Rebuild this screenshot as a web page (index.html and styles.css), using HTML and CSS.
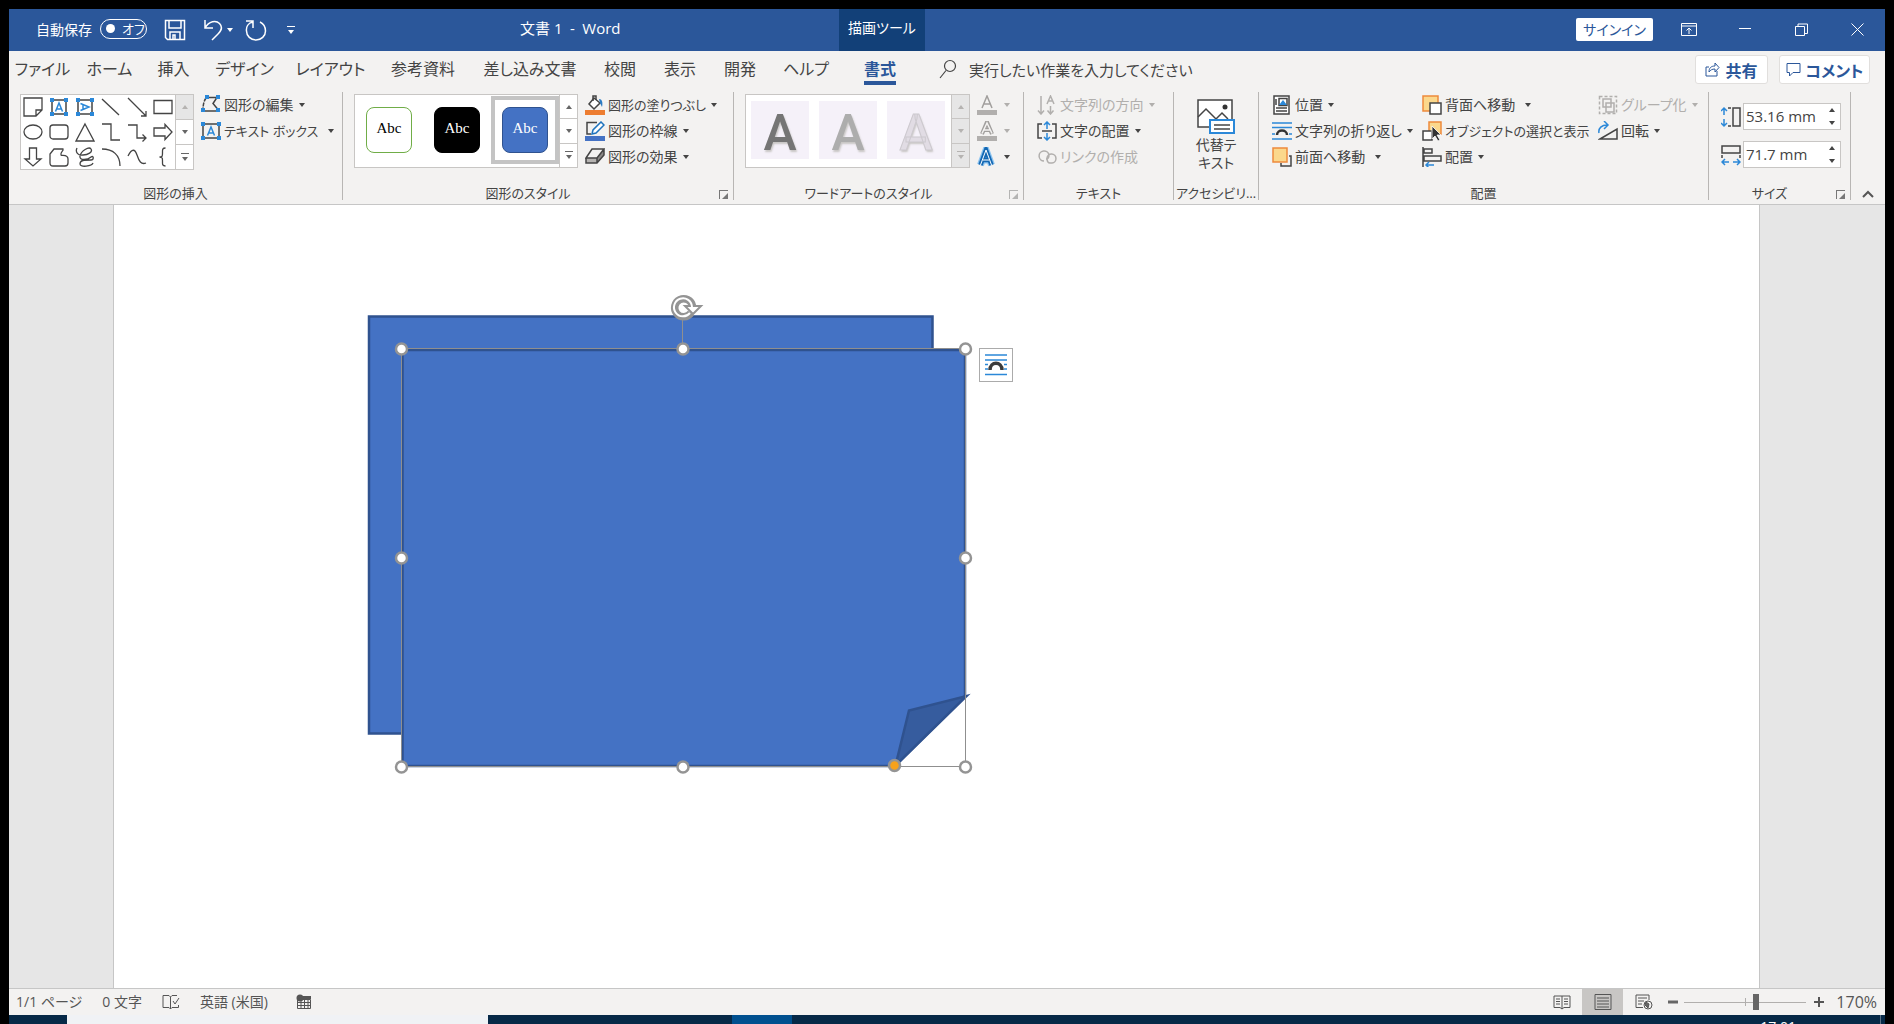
FILE: index.html
```html
<!DOCTYPE html>
<html lang="ja">

<head>
  <meta charset="UTF-8">
  <meta name="viewport" content="width=device-width, initial-scale=1.0">
  <title>文書 1 - Word</title>
  <link rel="stylesheet" href="styles.css">
</head>

<body>
  <div class="window">
    <header class="titlebar">
      <div class="quick-access">
        <label class="autosave" for="autosave">自動保存</label>
        <button type="button" class="toggle" id="autosave"><span class="knob"></span>オフ</button>
        <button type="button" class="qa-btn save" aria-label="保存">
          <svg width="22" height="22" viewBox="0 0 22 22" class="line"><path d="M1.5 1.5h19v19h-17l-2-2zM5 2v7h12V2M6 20v-7h10v7M9 20v-4h2v4"/></svg>
        </button>
        <button type="button" class="qa-btn undo" aria-label="元に戻す">
          <svg width="20" height="22" viewBox="0 0 20 22" class="line"><path d="M2 1v8h8M2 9C6 2 13 1 16.500 4.500C20 8 18 12 15 15l-6 6"/></svg>
          <span class="caret"></span>
        </button>
        <button type="button" class="qa-btn redo" aria-label="やり直し">
          <svg width="22" height="22" viewBox="0 0 22 22" class="line"><path d="M1 2h7v7M8 3C3 4 1 8 1.500 12a9.500 9 0 0 0 19 0C20.500 8 19 5 15 3"/></svg>
        </button>
        <button type="button" class="qa-btn customize" aria-label="カスタマイズ"><span class="bar"></span><span class="caret"></span></button>
      </div>
      <h1 class="doc-title">文書 1&ensp;-&ensp;Word</h1>
      <div class="tool-tab">描画ツール</div>
      <div class="window-controls">
        <button type="button" class="sign-in">サインイン</button>
        <button type="button" class="win-btn" aria-label="リボンの表示オプション">
          <svg width="16" height="14" viewBox="0 0 16 14" class="line"><path d="M.5 1.500h15v12H.5zM.5 4h15M8 12V6M5.500 8.500L8 6l2.500 2.500"/></svg>
        </button>
        <button type="button" class="win-btn" aria-label="最小化">
          <svg width="12" height="12" viewBox="0 0 12 12" class="line"><path d="M0 5.500h12"/></svg>
        </button>
        <button type="button" class="win-btn" aria-label="元に戻す (縮小)">
          <svg width="13" height="13" viewBox="0 0 13 13" class="line"><path d="M.5 3.500h9v9h-9zM3 3V1h9.500v9.500H10"/></svg>
        </button>
        <button type="button" class="win-btn" aria-label="閉じる">
          <svg width="13" height="13" viewBox="0 0 13 13" class="line"><path d="M.5.5l12 12M12.500.5l-12 12"/></svg>
        </button>
      </div>
    </header>

    <div class="tab-row">
      <nav class="tabs">
        <a href="#">ファイル</a>
        <a href="#">ホーム</a>
        <a href="#">挿入</a>
        <a href="#">デザイン</a>
        <a href="#">レイアウト</a>
        <a href="#">参考資料</a>
        <a href="#">差し込み文書</a>
        <a href="#">校閲</a>
        <a href="#">表示</a>
        <a href="#">開発</a>
        <a href="#">ヘルプ</a>
        <a href="#" class="active">書式</a>
      </nav>
      <button type="button" class="tell-me">
        <svg width="18" height="20" viewBox="0 0 18 20" class="line"><circle cx="11" cy="7" r="5.500"/><path d="M7 11.500L1 19"/></svg>
        実行したい作業を入力してください
      </button>
      <div class="tab-actions">
        <button type="button" class="action">
          <svg width="15" height="15" viewBox="0 0 15 15" class="line"><path d="M4 5H1v9h11V9M4 10c0-4 2-6 6-6V1l4 4.500-4 4.500V7C7 7 5.500 8 4 10z"/></svg>
          共有
        </button>
        <button type="button" class="action comment">
          <svg width="15" height="15" viewBox="0 0 15 15" class="line"><path d="M1 1.500h13v9H7l-3.500 3.500v-3.500H1z"/></svg>
          コメント
        </button>
      </div>
    </div>

    <div class="ribbon">
      <section class="group insert-shapes">
        <div class="group-body">
          <div class="gallery shapes">
            <div class="shape-grid">
              <svg viewBox="0 0 20 20" class="line"><path d="M1 1h18v12l-6 6H1zM13 19v-6h6"/></svg>
              <svg viewBox="0 0 20 20"><path class="ln" d="M3 3h14v14H3z"/><path class="accent" d="M1 1h4v4H1zM15 1h4v4h-4zM1 15h4v4H1zM15 15h4v4h-4z"/><path class="accent-ln" d="M6.500 14.500L10 6l3.500 8.500M8 12h4"/></svg>
              <svg viewBox="0 0 20 20"><path class="ln" d="M3 3h14v14H3z"/><path class="accent" d="M1 1h4v4H1zM15 1h4v4h-4zM1 15h4v4H1zM15 15h4v4h-4z"/><path class="accent-ln" d="M5.500 6.500L14 10l-8.500 3.500M8 8v4"/></svg>
              <svg viewBox="0 0 20 20" class="line"><path d="M1 2l17 16"/></svg>
              <svg viewBox="0 0 20 20" class="line"><path d="M1 1l18 18M14 19h5v-5"/></svg>
              <svg viewBox="0 0 20 20" class="line"><path d="M1 3.500h18v13H1z"/></svg>
              <svg viewBox="0 0 20 20" class="line"><ellipse cx="10" cy="10" rx="9" ry="7"/></svg>
              <svg viewBox="0 0 20 20" class="line"><rect x="1" y="3" width="18" height="14" rx="3"/></svg>
              <svg viewBox="0 0 20 20" class="line"><path d="M10 2l9 17H1z"/></svg>
              <svg viewBox="0 0 20 20" class="line"><path d="M1 2h9v16h9"/></svg>
              <svg viewBox="0 0 20 20" class="line"><path d="M1 3h9v13h9M15.500 12.500L19 16l-3.500 3.500"/></svg>
              <svg viewBox="0 0 20 20" class="line"><path d="M1 6h11V2.500l7 7.500-7 7.500V14H1z"/></svg>
              <svg viewBox="0 0 20 20" class="line"><path d="M6.500 1h7v11H18l-8 7-8-7h4.500z"/></svg>
              <svg viewBox="0 0 20 20" class="line"><path d="M5 2h9c1 2-3 3-2 6 1 1 7-1 7 4v4c0 2-1 3-3 3H4c-2 0-3-1-3-3V7z"/></svg>
              <svg viewBox="0 0 20 20" class="line"><path d="M2 1C0 5 3 9 8 8c5 0 10-3 8-6S6 4 5 9s8 4 11 1c3-2 3 3 0 3C9 13 5 13 5 17s12 2 13-1"/></svg>
              <svg viewBox="0 0 20 20" class="line"><path d="M1 2c11 0 18 6 18 17"/></svg>
              <svg viewBox="0 0 20 20" class="line"><path d="M1 9C5 1 8 2 10 8s4 10 9 8"/></svg>
              <svg viewBox="0 0 20 20" class="line"><path d="M12.500 1C9 1 9.500 3 9.500 6s0 4-3 4c3 0 3 1 3 4s-.5 5 3 5"/></svg>
            </div>
            <div class="scroller">
              <button type="button" class="off" aria-label="上へ"><span class="caret up"></span></button>
              <button type="button" aria-label="下へ"><span class="caret"></span></button>
              <button type="button" aria-label="その他"><span class="bar"></span><span class="caret"></span></button>
            </div>
          </div>
          <div class="commands">
            <button type="button" class="cmd">
              <svg viewBox="0 0 20 20"><path class="ln" stroke-dasharray="4 1" d="M5 3c-2 3-3 6-3 13"/><path class="ln" d="M2 16h14M6 2.500h10l-4 6 5 6"/><path class="accent" d="M4 0h4v4H4zM15 0h4v4h-4zM0 13h4v4H0zM15 13h4v4h-4z"/></svg>
              図形の編集<span class="caret"></span>
            </button>
            <button type="button" class="cmd tight">
              <svg viewBox="0 0 20 20"><path class="ln" d="M2 3h16v14H2z"/><path class="accent" d="M0 1h4v4H0zM16 1h4v4h-4zM0 15h4v4H0zM16 15h4v4h-4z"/><path class="accent-ln" d="M6.500 14.500L10 6l3.500 8.500M8 12h4"/></svg>
              テキスト ボックス<span class="caret split"></span>
            </button>
          </div>
        </div>
        <h2 class="group-label">図形の挿入</h2>
      </section>

      <section class="group shape-styles">
        <div class="group-body">
          <div class="gallery">
            <div class="style-list">
              <button type="button" class="style"><span class="swatch outline">Abc</span></button>
              <button type="button" class="style"><span class="swatch black">Abc</span></button>
              <button type="button" class="style selected"><span class="swatch blue">Abc</span></button>
            </div>
            <div class="scroller">
              <button type="button" aria-label="上へ"><span class="caret up"></span></button>
              <button type="button" aria-label="下へ"><span class="caret"></span></button>
              <button type="button" aria-label="その他"><span class="bar"></span><span class="caret"></span></button>
            </div>
          </div>
          <div class="commands">
            <button type="button" class="cmd tight">
              <svg viewBox="0 0 20 20"><path fill="#ed7d31" d="M0 15h20v5H0z"/><path fill="#fff" class="ln" d="M9 3l6 5-6 6-5-5z"/><path class="ln" d="M8 6V1h3v4"/><path fill="#2b7cc4" d="M14 4c3 0 4 3 3 8l-2-4z"/></svg>
              図形の塗りつぶし<span class="caret"></span>
            </button>
            <button type="button" class="cmd">
              <svg viewBox="0 0 20 20"><path fill="#4472c4" d="M0 15h20v5H0z"/><path class="ln" d="M12 1.500H2V13h4"/><path fill="#fff" stroke="#1e73be" stroke-width="1.500" d="M7 13l1-4 8-8 3 3-8 8z"/></svg>
              図形の枠線<span class="caret"></span>
            </button>
            <button type="button" class="cmd">
              <svg viewBox="0 0 20 20"><path fill="#8a8886" d="M12 11l7-9v6l-7 8z"/><path fill="#b5b3b1" d="M1 11h11v5H1z"/><path class="ln" d="M1 11l6-9h12l-7 9zM1 11v5h11l7-8V2M12 11v5"/></svg>
              図形の効果<span class="caret"></span>
            </button>
          </div>
        </div>
        <h2 class="group-label">図形のスタイル</h2>
        <button type="button" class="launcher" aria-label="図形の書式設定"></button>
      </section>

      <section class="group wordart">
        <div class="group-body">
          <div class="gallery">
            <div class="art-list">
              <button type="button" class="art dark">A</button>
              <button type="button" class="art mid">A</button>
              <button type="button" class="art light">A</button>
            </div>
            <div class="scroller">
              <button type="button" class="off" aria-label="上へ"><span class="caret up"></span></button>
              <button type="button" class="off" aria-label="下へ"><span class="caret"></span></button>
              <button type="button" class="off" aria-label="その他"><span class="bar"></span><span class="caret"></span></button>
            </div>
          </div>
          <div class="commands">
            <button type="button" class="cmd disabled" aria-label="文字の塗りつぶし">
              <svg viewBox="0 0 20 20"><path fill="#b1afad" d="M0 15h20v5H0z"/><path fill="none" stroke="#a19f9d" stroke-width="1.500" d="M5 13L10 1l5 12M7 9h6"/></svg>
              <span class="caret"></span>
            </button>
            <button type="button" class="cmd disabled" aria-label="文字の輪郭">
              <svg viewBox="0 0 20 20"><path fill="#b1afad" d="M0 15h20v5H0z"/><path fill="none" stroke="#a19f9d" stroke-width="4" d="M5 13L10 1l5 12M7 9h6"/><path fill="none" stroke="#f3f2f1" stroke-width="1.500" d="M5 12.500L10 2l5 10.500M7 9h6"/></svg>
              <span class="caret"></span>
            </button>
            <button type="button" class="cmd" aria-label="文字の効果">
              <svg viewBox="0 0 20 20"><path fill="none" stroke="#8cc4f0" stroke-width="7" d="M3.500 18L9 3l5.500 15M6 13h6"/><path fill="none" stroke="#1468b3" stroke-width="4.500" d="M3.500 18L9 3l5.500 15M6 13h6"/><path fill="none" stroke="#fff" stroke-width="1" d="M3.500 18L9 3l5.500 15M6 13h6"/></svg>
              <span class="caret"></span>
            </button>
          </div>
        </div>
        <h2 class="group-label">ワードアートのスタイル</h2>
        <button type="button" class="launcher disabled" aria-label="文字の効果の設定"></button>
      </section>

      <section class="group text-group">
        <div class="group-body">
          <div class="commands">
            <button type="button" class="cmd disabled">
              <svg viewBox="0 0 20 20" class="line"><path d="M4 1v18M1 15.500L4 19l3-3.500M10 9l3.500-8L17 9M11.500 6h4M13.500 11v8M10.500 15.500l3 3.500 3-3.500"/></svg>
              文字列の方向<span class="caret"></span>
            </button>
            <button type="button" class="cmd">
              <svg viewBox="0 0 20 20"><path class="ln" d="M5 3H1v14h4M15 3h4v14h-4M5 10h10"/><path class="accent-ln" d="M10 1v7M7 4l3-3 3 3M10 12v7M7 16l3 3 3-3"/></svg>
              文字の配置<span class="caret"></span>
            </button>
            <button type="button" class="cmd disabled">
              <svg viewBox="0 0 20 20" class="line"><path d="M7 14a5 5 0 1 1 5-6c0 2-1 4-3 4M13 16h2a4.500 4.500 0 1 0-5-5c0 3 1 5 3 5"/></svg>
              リンクの作成
            </button>
          </div>
        </div>
        <h2 class="group-label">テキスト</h2>
      </section>

      <section class="group accessibility">
        <div class="group-body">
          <button type="button" class="big-cmd">
            <svg width="38" height="36" viewBox="0 0 38 36"><path fill="#fff" class="ln" d="M1 2h34v27H1z"/><path class="ln" d="M1 19l8-8 10 10 6-6 6 6"/><circle cx="28" cy="9" r="2.500" fill="#333"/><path fill="#fff" stroke="#2b88d8" stroke-width="2" d="M13 22h24v13H13z"/><path class="ln" d="M17 27h16M17 31h16"/></svg>
            <span>代替テ<br>キスト</span>
          </button>
        </div>
        <h2 class="group-label">アクセシビリ…</h2>
      </section>

      <section class="group arrange">
        <div class="group-body">
          <div class="commands">
            <button type="button" class="cmd">
              <svg viewBox="0 0 20 20"><path fill="#fff" class="ln" d="M2 1h15v18H2z"/><path class="ln" d="M7 3.500h8v7H7zM4 4v6M4 13h11M4 16h11"/><path class="accent" d="M7 10l4-5 4 5z"/></svg>
              位置<span class="caret"></span>
            </button>
            <button type="button" class="cmd">
              <svg viewBox="0 0 20 20"><path class="accent-ln" d="M0 2h20M0 6.500h20M0 13h3M17 13h3M0 18h20"/><path fill="none" stroke="#333" stroke-width="2.500" d="M5 14c0-6 10-6 10 0"/></svg>
              文字列の折り返し<span class="caret"></span>
            </button>
            <button type="button" class="cmd">
              <svg viewBox="0 0 20 20"><path class="ln" d="M17 9h2v10H9v-3"/><path class="sheet" d="M1 1h14v14H1z"/></svg>
              前面へ移動<span class="caret split"></span>
            </button>
          </div>
          <div class="commands">
            <button type="button" class="cmd">
              <svg viewBox="0 0 20 20"><path class="sheet" d="M1 1h15v15H1z"/><path fill="#fff" class="ln" d="M8 8h11v11H8z"/></svg>
              背面へ移動<span class="caret split"></span>
            </button>
            <button type="button" class="cmd tight">
              <svg viewBox="0 0 20 20"><path class="sheet" d="M7 1h12v12H7z"/><path fill="#fff" class="ln" d="M1 10h9v9H1z"/><path fill="#333" stroke="#fff" stroke-width=".8" d="M10 5v13l3-3 3 5 2-1-3-5h4z"/></svg>
              オブジェクトの選択と表示
            </button>
            <button type="button" class="cmd">
              <svg viewBox="0 0 20 20"><path class="ln" d="M1 0v20M2 2h8v4H2zM2 9h17v5H2z"/><path class="accent-ln" d="M12 18H4M7 15l-3 3 3 3"/></svg>
              配置<span class="caret"></span>
            </button>
          </div>
          <div class="commands">
            <button type="button" class="cmd disabled">
              <svg viewBox="0 0 20 20" class="line"><path d="M5 4h8v8H5zM8 8h8v9H8z"/><path stroke-dasharray="3 2" d="M1.500 1.500h17v17h-17z"/></svg>
              グループ化<span class="caret"></span>
            </button>
            <button type="button" class="cmd">
              <svg viewBox="0 0 20 20"><path class="ln" d="M2 18L19 8v10z"/><path class="accent-ln" d="M1 12C0 7 4 4 9 4M6 0l4 4-4 4"/></svg>
              回転<span class="caret"></span>
            </button>
          </div>
        </div>
        <h2 class="group-label">配置</h2>
      </section>

      <section class="group size">
        <div class="size-fields">
          <div class="field">
            <label for="height" aria-label="高さ"><svg width="20" height="22" viewBox="0 0 20 22"><path class="ln" d="M12 2h7v18h-7zM7 2h3M7 20h3"/><path class="accent-ln" d="M3 2v7M0 5l3-3 3 3M3 13v7M0 17l3 3 3-3"/></svg></label>
            <input type="text" id="height" value="53.16 mm">
            <span class="spin"><span class="caret up"></span><span class="caret"></span></span>
          </div>
          <div class="field">
            <label for="width" aria-label="幅"><svg width="20" height="22" viewBox="0 0 20 22"><path class="ln" d="M1 2h18v7H1zM1 11v3M19 11v3"/><path class="accent-ln" d="M8 18H1M4 15l-3 3 3 3M12 18h7M16 15l3 3-3 3"/></svg></label>
            <input type="text" id="width" value="71.7 mm">
            <span class="spin"><span class="caret up"></span><span class="caret"></span></span>
          </div>
        </div>
        <h2 class="group-label">サイズ</h2>
        <button type="button" class="launcher" aria-label="サイズの設定"></button>
      </section>

      <button type="button" class="collapse" aria-label="リボンを折りたたむ">
        <svg width="12" height="8" viewBox="0 0 12 8"><path fill="none" stroke="#555" stroke-width="2" d="M1 7l5-5 5 5"/></svg>
      </button>
    </div>

    <main class="workspace">
      <div class="page">
        <div class="canvas">
          <svg width="620" height="490" viewBox="360 290 620 490">
            <!-- back sheet, open where the front one covers it -->
            <path class="shape" d="M410 733.500h-41v-417h563.500V360"/>
            <!-- front sheet with the folded corner -->
            <path class="shape" d="M402.500 350H965v346l-70 70H402.500z"/>
            <path fill="#365c9e" stroke="#2f528f" stroke-width="2.500" d="M895.500 765.500L909 710.500l57.500-14.500z"/>
            <path fill="none" stroke="#8f8f8f" d="M401.500 348.500h564v418h-564zM682.500 318v30"/>
            <g class="handle">
              <circle cx="401.500" cy="349" r="5.500"/>
              <circle cx="683" cy="349" r="5.500"/>
              <circle cx="965.500" cy="349" r="5.500"/>
              <circle cx="401.500" cy="558" r="5.500"/>
              <circle cx="965.500" cy="558" r="5.500"/>
              <circle cx="401.500" cy="767" r="5.500"/>
              <circle cx="683" cy="767" r="5.500"/>
              <circle cx="965.500" cy="767" r="5.500"/>
              <circle cx="894.500" cy="765.500" r="5.500" class="adjust"/>
            </g>
            <!-- rotation handle -->
            <path fill="none" stroke="#949494" stroke-width="7.500" d="M691 313a9 9 0 1 1 1.500-7"/>
            <path fill="#fff" stroke="#949494" stroke-width="2" d="M685 306h16l-8 8z"/>
            <path fill="none" stroke="#fff" stroke-width="2" d="M690 313a9 9 0 1 1 2-6"/>
          </svg>
          <button type="button" class="layout-options" aria-label="レイアウト オプション">
            <svg width="22" height="22" viewBox="0 0 22 22"><path class="accent-ln" d="M0 1h22M0 6h22M0 10.500h3M19 10.500h3M0 15h3M19 15h3M0 20.500h22"/><path fill="none" stroke="#3b3b3b" stroke-width="3.500" d="M5 16c0-9 12-9 12 0"/></svg>
          </button>
        </div>
      </div>
    </main>

    <footer class="statusbar">
      <span class="stat">1/1 ページ</span>
      <span class="stat">0 文字</span>
      <svg width="18" height="16" viewBox="0 0 18 16" class="line"><path d="M8.500 3v12M8.500 3L7 1.500H1v12h6L8.500 15l1.500-1.500h6.500V11M8.500 3L10 1.500h5M11 7l2 3 4-6"/></svg>
      <span class="stat language">英語 (米国)</span>
      <svg width="16" height="16" viewBox="0 0 16 16"><path fill="none" stroke="#555" d="M1.500 5.500h13v9h-13zM1.500 8.500h13M1.500 11.500h13M5 6v9M8.500 6v9M12 6v9"/><path fill="#555" d="M7 2h8v3H7z"/><circle cx="4" cy="4" r="3.500" fill="#555"/></svg>
      <div class="views">
        <button type="button" aria-label="閲覧モード"><svg width="18" height="16" viewBox="0 0 18 16" class="line"><path d="M9 2v13M9 2H1v11.500h6L9 15l2-1.500h6V2H9M3 5h4M3 7.500h4M3 10h4M11 5h4M11 7.500h4M11 10h4"/></svg></button>
        <button type="button" class="current" aria-label="印刷レイアウト"><svg width="18" height="16" viewBox="0 0 18 16" class="line"><path d="M1 .5h16v15H1zM3 4h12M3 7h12M3 10h12M3 13h12"/></svg></button>
        <button type="button" aria-label="Web レイアウト"><svg width="18" height="16" viewBox="0 0 18 16" class="line"><path d="M8 13.500H1V1h13v5M3 4h9M3 7h6M3 10h4"/><circle cx="13" cy="11" r="4"/><path fill="#666" d="M11 8l3 2-1 4-3-3z"/></svg></button>
      </div>
      <button type="button" class="zoom-btn" aria-label="縮小"><svg width="10" height="12" viewBox="0 0 10 12"><path fill="#666" d="M0 4.500h10v3H0z"/></svg></button>
      <input type="range" class="zoom" min="0" max="100" value="59" aria-label="ズーム">
      <button type="button" class="zoom-btn" aria-label="拡大"><svg width="10" height="12" viewBox="0 0 10 12"><path stroke="#555" stroke-width="2" d="M0 6h10M5 1v10"/></svg></button>
      <span class="percent">170%</span>
    </footer>
  </div>

  <div class="taskbar">
    <div class="task-search"></div>
    <div class="task-active"></div>
    <div class="clock">17:01</div>
    <div class="show-desktop"></div>
  </div>
</body>

</html>
```
FILE: styles.css
```css
* {
  box-sizing: border-box;
}

body {
  margin: 0;
  height: 100vh;
  display: flex;
  flex-direction: column;
  overflow: hidden;
  background-color: #000;
  color: #444;
  font-family: "Open Sans", "Noto Sans CJK JP", sans-serif;
  font-feature-settings: "palt";
  font-size: 14px;
}

button,
input {
  margin: 0;
  padding: 0;
  border: none;
  background: none;
  color: inherit;
  font: inherit;
  font-feature-settings: inherit;
}

a {
  color: inherit;
  text-decoration: none;
}

svg {
  display: block;
  flex-shrink: 0;
}

.line {
  fill: none;
  stroke: currentColor;
  stroke-width: 1.5;
}

.ln {
  stroke: #444;
  stroke-width: 1.5;
}

.ln:not([fill]) {
  fill: none;
}

.accent {
  fill: #2b88d8;
}

.accent-ln {
  fill: none;
  stroke: #2b88d8;
  stroke-width: 1.5;
}

.sheet {
  fill: #fbd88c;
  stroke: #ee8a3c;
  stroke-width: 1.5;
}

.caret {
  display: inline-block;
  border: 3px solid transparent;
  border-top: 4px solid currentColor;
  border-bottom: none;
}

.caret.up {
  border-top: none;
  border-bottom: 4px solid currentColor;
}

.bar {
  width: 8px;
  height: 1px;
  margin-bottom: 3px;
  background-color: currentColor;
}

.window {
  flex: 1;
  min-height: 0;
  display: flex;
  flex-direction: column;
  margin: 9px 9px 0;
  background-color: #f3f2f1;
}

/* Title bar */
.titlebar {
  display: flex;
  align-items: stretch;
  height: 42px;
  background-color: #2b579a;
  color: #fff;
}

.quick-access {
  display: flex;
  align-items: center;
  flex: 0 0 511px;
  padding-left: 27px;
}

.autosave,
.toggle {
  margin-bottom: 3px;
}

.toggle {
  display: flex;
  align-items: center;
  gap: 7px;
  width: 47px;
  height: 20px;
  margin-left: 8px;
  padding-left: 5px;
  border: 1px solid #fff;
  border-radius: 10px;
  font-size: 13px;
  line-height: 18px;
  white-space: nowrap;
}

.knob {
  flex-shrink: 0;
  width: 9px;
  height: 9px;
  border-radius: 50%;
  background-color: #fff;
}

.qa-btn {
  display: flex;
  align-items: center;
  gap: 4px;
  margin-left: 17px;
}

.redo {
  margin-left: 12px;
}

.customize {
  flex-direction: column;
  gap: 0;
  margin-left: 20px;
}

.doc-title {
  flex: 0 0 319px;
  margin: 0;
  font-size: 15px;
  font-weight: 400;
  line-height: 38px;
}

.tool-tab {
  flex: 0 0 86px;
  background-color: #124078;
  line-height: 38px;
  text-align: center;
}

.window-controls {
  display: flex;
  align-items: center;
  margin-left: auto;
  padding-bottom: 2px;
}

.sign-in {
  width: 77px;
  height: 23px;
  margin-right: 8px;
  border-radius: 2px;
  background-color: #fff;
  color: #2b579a;
  line-height: 23px;
}

.win-btn {
  display: flex;
  align-items: center;
  justify-content: center;
  width: 56px;
  height: 100%;
}

.win-btn .line {
  stroke-width: 1;
}

/* Tabs */
.tab-row {
  display: flex;
  align-items: stretch;
  height: 40px;
  font-size: 16px;
}

.tabs {
  display: grid;
  grid-template-columns: 67px 67px 61px 81px 91px 94px 120px 60px 60px 60px 72px 76px;
}

.tabs a {
  justify-self: center;
  height: 34px;
  line-height: 36px;
  white-space: nowrap;
}

.tabs .active {
  border-bottom: 4px solid #2b579a;
  color: #2b579a;
  font-weight: 700;
}

.tell-me {
  display: flex;
  align-items: center;
  gap: 12px;
  margin-left: 21px;
  padding-bottom: 4px;
  font-size: 15px;
}

.tell-me .line {
  stroke-width: 1.2;
}

.tab-actions {
  display: flex;
  gap: 11px;
  margin: 4px 15px 0 auto;
}

.action {
  display: flex;
  align-items: center;
  justify-content: center;
  gap: 5px;
  width: 73px;
  height: 29px;
  border: 1px solid #e1dfdd;
  border-radius: 3px;
  background-color: #fff;
  color: #2b579a;
  font-weight: 700;
}

.comment {
  width: 91px;
}

.action .line {
  stroke-width: 1;
}

/* Ribbon */
.ribbon {
  display: grid;
  grid-template-columns: 334px 391px 290px 150px 85px 450px 142px 1fr;
  height: 114px;
  padding-top: 1px;
  border-bottom: 1px solid #c6c6c6;
}

.group {
  position: relative;
  display: flex;
  flex-direction: column;
  justify-content: space-between;
  height: 108px;
  border-right: 1px solid #b8b6b4;
}

.group-body {
  display: flex;
  align-items: flex-start;
}

.group-label {
  margin: 0;
  font-size: 13px;
  font-weight: 400;
  line-height: 14px;
  text-align: center;
  white-space: nowrap;
}

.shape-styles .group-label,
.wordart .group-label,
.size .group-label {
  padding-right: 20px;
}

.gallery {
  display: flex;
  height: 74px;
  margin: 2px 7px 0 11px;
  border: 1px solid #c8c6c4;
  background-color: #fff;
}

.shapes {
  height: 76px;
}

.shape-grid {
  display: grid;
  grid-template-columns: repeat(6, 20px);
  gap: 5px 6px;
  padding: 2px;
}

.shape-grid .line {
  stroke-width: 1.3;
}

.shape-grid svg {
  width: 20px;
  height: 20px;
}

.scroller {
  display: flex;
  flex-direction: column;
  width: 18px;
  color: #666;
}

.scroller button {
  display: flex;
  flex: 1;
  flex-direction: column;
  align-items: center;
  justify-content: center;
  border-left: 1px solid #c8c6c4;
}

.scroller button + button {
  border-top: 1px solid #c8c6c4;
}

.scroller .off {
  background-color: #e6e6e6;
  color: #b5b3b1;
}

.commands {
  display: flex;
  flex-direction: column;
}

.cmd {
  display: flex;
  align-items: center;
  gap: 3px;
  height: 26px;
  line-height: 26px;
  white-space: nowrap;
}

.tight {
  font-size: 13px;
}

.cmd svg {
  width: 20px;
  height: 20px;
}

.cmd .caret {
  margin-left: 2px;
}

.cmd .split {
  margin-left: 7px;
}

.disabled {
  color: #b1afad;
}

.launcher {
  position: absolute;
  right: 5px;
  bottom: 1px;
  width: 9px;
  height: 9px;
  border-top: 1px solid #777;
  border-left: 1px solid #777;
}

.launcher::after {
  content: "";
  position: absolute;
  right: 0;
  bottom: 0;
  border: 3px solid #777;
  border-top-color: transparent;
  border-left-color: transparent;
}

.launcher.disabled {
  opacity: 0.5;
}

.style-list {
  display: flex;
  padding: 1px 0;
}

.style {
  display: flex;
  align-items: center;
  justify-content: center;
  width: 68px;
  height: 68px;
}

.selected {
  border: 4px solid #c4c4c4;
}

.swatch {
  width: 46px;
  height: 46px;
  border: 1px solid;
  border-radius: 8px;
  font-family: "Liberation Serif", serif;
  font-size: 15px;
  line-height: 40px;
  text-align: center;
}

.outline {
  border-color: #70ad47;
  color: #000;
}

.black {
  border-color: #000;
  background-color: #000;
  color: #fff;
}

.blue {
  border-color: #2f528f;
  background-color: #4472c4;
  color: #fff;
}

.art-list {
  display: flex;
  gap: 10px;
  padding: 6px 6px 0 5px;
}

.art {
  width: 58px;
  height: 58px;
  background-color: #f5f1f9;
  font-family: Roboto, sans-serif;
  font-size: 50px;
  font-weight: 500;
  line-height: 64px;
  text-shadow: 1px 2px 2px #c8c6c4;
}

.dark {
  color: #757575;
}

.mid {
  color: #adadad;
}

.light {
  color: #e1dce4;
  -webkit-text-stroke: 1px #cdc9cf;
}

.wordart .cmd {
  gap: 5px;
}

.text-group .commands {
  margin-left: 13px;
}

.big-cmd {
  display: flex;
  flex-direction: column;
  align-items: center;
  width: 100%;
  padding-top: 6px;
  line-height: 18px;
}

.big-cmd svg {
  margin-bottom: 2px;
}

.arrange .group-body {
  display: grid;
  grid-template-columns: 150px 176px auto;
  padding-left: 13px;
}

.size-fields {
  display: flex;
  flex-direction: column;
  gap: 11px;
  padding: 11px 9px 0 12px;
}

.field {
  display: flex;
  align-items: center;
  gap: 2px;
  height: 27px;
}

.field input {
  flex: 1;
  min-width: 0;
  height: 27px;
  padding: 0 0 1px 2px;
  border: 1px solid #c8c6c4;
  border-right: none;
  background-color: #fff;
  font-size: 15px;
}

.spin {
  display: flex;
  flex-direction: column;
  align-items: center;
  justify-content: center;
  gap: 9px;
  width: 18px;
  height: 27px;
  margin-left: -2px;
  border: 1px solid #c8c6c4;
  border-left: none;
  background-color: #fff;
}

.collapse {
  align-self: end;
  justify-self: center;
  padding-bottom: 6px;
}

/* Document */
.workspace {
  flex: 1;
  min-height: 0;
  padding: 0 125px 0 104px;
  background-color: #e6e6e6;
}

.page {
  height: 100%;
  padding: 85px 0 0 246px;
  border-right: 1px solid #c6c6c6;
  border-left: 1px solid #c6c6c6;
  background-color: #fff;
}

.canvas {
  position: relative;
  width: 620px;
}

.shape {
  fill: #4472c4;
  stroke: #2f528f;
  stroke-width: 2.5;
}

.handle circle {
  fill: #fff;
  stroke: #949494;
  stroke-width: 2.5;
}

.handle .adjust {
  fill: #f7a21b;
}

.layout-options {
  position: absolute;
  top: 58px;
  left: 619px;
  display: flex;
  align-items: center;
  justify-content: center;
  width: 34px;
  height: 34px;
  border: 1px solid #ababab;
  background-color: #fff;
}

/* Status bar */
.statusbar {
  display: flex;
  align-items: center;
  gap: 20px;
  height: 27px;
  padding: 0 8px 0 7px;
  border-top: 1px solid #c6c6c6;
  color: #555;
  line-height: 26px;
}

.statusbar .line {
  stroke-width: 1;
}

.language {
  padding-right: 8px;
}

.views {
  display: flex;
  margin-left: auto;
}

.views button {
  display: flex;
  align-items: center;
  justify-content: center;
  width: 41px;
  height: 26px;
}

.views .current {
  background-color: #c8c6c4;
}

.zoom-btn {
  margin-right: -16px;
}

.views + .zoom-btn {
  margin-left: -16px;
}

.zoom {
  width: 122px;
  height: 20px;
  margin: 0 -12px 0 2px;
  appearance: none;
}

.zoom::-webkit-slider-runnable-track {
  height: 16px;
  background: linear-gradient(#b1afad, #b1afad) center / 100% 1px no-repeat, linear-gradient(#b1afad, #b1afad) 50% 50% / 1px 8px no-repeat;
}

.zoom::-webkit-slider-thumb {
  width: 6px;
  height: 16px;
  appearance: none;
  background-color: #666;
}

.percent {
  margin-left: 8px;
  font-size: 16px;
}

/* Taskbar */
.taskbar {
  display: flex;
  height: 9px;
  margin: 0 9px;
  overflow: hidden;
  background-color: #062947;
}

.task-search {
  width: 421px;
  margin-left: 58px;
  background-color: #f0f2f5;
}

.task-active {
  width: 60px;
  margin-left: 244px;
  background-color: #00508f;
}

.clock {
  margin: 5px 84px 0 auto;
  color: #fff;
  line-height: 14px;
}

.show-desktop {
  width: 5px;
  border-left: 1px solid #5a7085;
}
```
